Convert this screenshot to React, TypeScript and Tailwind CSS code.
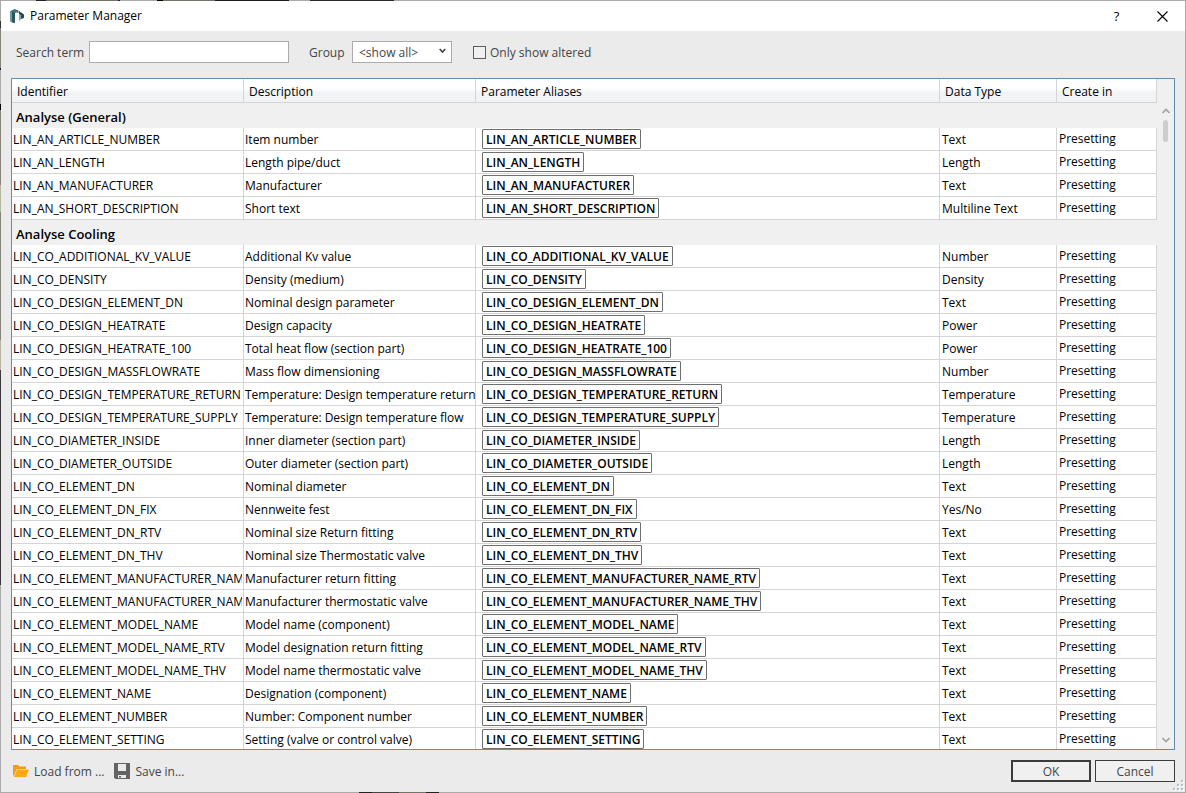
import { useRef, useState } from "react";
import { clsx } from "clsx";

type Row = {
  id: string;
  description: string;
  type: string;
};

type Group = {
  name: string;
  rows: Row[];
};

const row = (id: string, description: string, type: string): Row => ({ id, description, type });

const GROUPS: Group[] = [
  {
    name: "Analyse (General)",
    rows: [
      row("LIN_AN_ARTICLE_NUMBER", "Item number", "Text"),
      row("LIN_AN_LENGTH", "Length pipe/duct", "Length"),
      row("LIN_AN_MANUFACTURER", "Manufacturer", "Text"),
      row("LIN_AN_SHORT_DESCRIPTION", "Short text", "Multiline Text"),
    ],
  },
  {
    name: "Analyse Cooling",
    rows: [
      row("LIN_CO_ADDITIONAL_KV_VALUE", "Additional Kv value", "Number"),
      row("LIN_CO_DENSITY", "Density (medium)", "Density"),
      row("LIN_CO_DESIGN_ELEMENT_DN", "Nominal design parameter", "Text"),
      row("LIN_CO_DESIGN_HEATRATE", "Design capacity", "Power"),
      row("LIN_CO_DESIGN_HEATRATE_100", "Total heat flow (section part)", "Power"),
      row("LIN_CO_DESIGN_MASSFLOWRATE", "Mass flow dimensioning", "Number"),
      row("LIN_CO_DESIGN_TEMPERATURE_RETURN", "Temperature: Design temperature return", "Temperature"),
      row("LIN_CO_DESIGN_TEMPERATURE_SUPPLY", "Temperature: Design temperature flow", "Temperature"),
      row("LIN_CO_DIAMETER_INSIDE", "Inner diameter (section part)", "Length"),
      row("LIN_CO_DIAMETER_OUTSIDE", "Outer diameter (section part)", "Length"),
      row("LIN_CO_ELEMENT_DN", "Nominal diameter", "Text"),
      row("LIN_CO_ELEMENT_DN_FIX", "Nennweite fest", "Yes/No"),
      row("LIN_CO_ELEMENT_DN_RTV", "Nominal size Return fitting", "Text"),
      row("LIN_CO_ELEMENT_DN_THV", "Nominal size Thermostatic valve", "Text"),
      row("LIN_CO_ELEMENT_MANUFACTURER_NAME_RTV", "Manufacturer return fitting", "Text"),
      row("LIN_CO_ELEMENT_MANUFACTURER_NAME_THV", "Manufacturer thermostatic valve", "Text"),
      row("LIN_CO_ELEMENT_MODEL_NAME", "Model name (component)", "Text"),
      row("LIN_CO_ELEMENT_MODEL_NAME_RTV", "Model designation return fitting", "Text"),
      row("LIN_CO_ELEMENT_MODEL_NAME_THV", "Model name thermostatic valve", "Text"),
      row("LIN_CO_ELEMENT_NAME", "Designation (component)", "Text"),
      row("LIN_CO_ELEMENT_NUMBER", "Number: Component number", "Text"),
      row("LIN_CO_ELEMENT_SETTING", "Setting (valve or control valve)", "Text"),
    ],
  },
];

const HEADERS = ["Identifier", "Description", "Parameter Aliases", "Data Type", "Create in"];

function AppLogo() {
  return (
    <svg width="14" height="16" viewBox="0 0 14 16" aria-hidden="true">
      <path d="M0 3.5 2 2.500V14.500L0 13.500z" fill="#6b9da2" />
      <path d="M2 2.500 5 4v11l-3-.500z" fill="#2c565c" />
      <path d="M0 3.500 4.500 1 8.500 2.500V5L6.500 4.500 5 5z" fill="#3f7378" />
      <path d="M9 3 14 6.500V10l-3 1V7.500L9 6z" fill="#234b52" />
      <path d="M9 6 11 7.500V11l-2 2z" fill="#7aa5a9" />
    </svg>
  );
}

function FolderIcon() {
  return (
    <svg width="16" height="12" viewBox="0 0 16 12" aria-hidden="true">
      <path d="M0 1c0-.6.4-1 1-1h4l1.500 1.500H13V4H3.500L1 10.500H0z" fill="#f39c12" />
      <path d="M4 4.600h12L13 12H1z" fill="#ffa812" />
    </svg>
  );
}

function DiskIcon() {
  return (
    <svg width="16" height="16" viewBox="0 0 16 16" aria-hidden="true">
      <path d="M0 0h16v16H1.500L0 14.500z" fill="#636363" />
      <path d="M4 1h8v7H4z" fill="#ebebeb" />
      <path d="M4 12h8v3H4z" fill="#ebebeb" />
      <path d="M5 13h2v1.500H5z" fill="#636363" />
    </svg>
  );
}

function Chevron({ up = false }: { up?: boolean }) {
  return (
    <svg width="8" height="6" viewBox="0 0 8 6" fill="none" stroke="#a3a3a3" strokeWidth="1.6" aria-hidden="true">
      <path d={up ? "M.5 5 4 1.500 7.500 5" : "M.5 1 4 4.500 7.500 1"} />
    </svg>
  );
}

function SizeGrip() {
  const dots = [[8, 0], [4, 4], [8, 4], [0, 8], [4, 8], [8, 8]];
  return (
    <svg className="absolute right-px bottom-px" width="11" height="11" viewBox="0 0 11 11" aria-hidden="true">
      {dots.map(([x, y]) => (
        <g key={`${x}-${y}`}>
          <rect x={x + 1} y={y + 1} width="2" height="2" fill="#fff" />
          <rect x={x} y={y} width="2" height="2" fill="#b4bccb" />
        </g>
      ))}
    </svg>
  );
}

// Thin slivers of the application behind the dialog, visible along its frame.
function FrameEdges() {
  return (
    <>
      <div className="pointer-events-none absolute -top-px left-[35px] h-px w-[358px] bg-[linear-gradient(90deg,#222_10px,#757367_10px_82px,#222_82px_84px,#aaa_84px_121px,#000_121px_127px,#757367_127px_179px,#1e1a1c_179px_253px,#aaa_253px_274px,#2d292c_274px)]" />
      <div className="pointer-events-none absolute top-5 -left-px h-[564px] w-px bg-[linear-gradient(#333_7px,#85827a_7px_47px,#222_47px_49px,#aaa_49px_83px,#000_83px_89px,#85827a_89px_164px,#b5b5a0_164px_191px,#85827a_191px_319px,#b5b5a0_319px_349px,#3c3a3c_349px)]" />
      <div className="pointer-events-none absolute -bottom-px left-[358px] h-px w-20 bg-[linear-gradient(90deg,#222_13px,#444_13px_40px,#757367_40px_67px,#222_67px)]" />
    </>
  );
}

export default function App() {
  const [search, setSearch] = useState("");
  const [group, setGroup] = useState("");
  const [onlyAltered, setOnlyAltered] = useState(false);
  const scroller = useRef<HTMLDivElement>(null);

  const scrollBy = (top: number) => scroller.current?.scrollBy({ top });

  const term = search.trim().toLowerCase();
  const groups = GROUPS.filter((g) => !group || g.name === group)
    .map((g) => ({
      ...g,
      rows: g.rows.filter((r) => `${r.id} ${r.description}`.toLowerCase().includes(term)),
    }))
    .filter((g) => g.rows.length > 0);

  return (
    <div className="relative flex h-screen flex-col border border-[#aaaaaa] bg-[#ebebeb] font-['Open_Sans','Noto_Sans',sans-serif] text-[12px] leading-4 text-[#444444]">
      {/* Title bar */}
      <header className="flex h-[30px] shrink-0 items-center bg-white pl-[9px] text-black">
        <AppLogo />
        <h1 className="ml-1.5 flex-1">Parameter Manager</h1>
        <button type="button" aria-label="Help" className="w-[45px] text-[13px] font-medium">?</button>
        <button type="button" aria-label="Close" className="flex w-[46px] justify-center">
          <svg width="11" height="11" viewBox="0 0 11 11" stroke="#000" strokeWidth="1.1" aria-hidden="true">
            <path d="M.5.500l10 10M10.500.500l-10 10" />
          </svg>
        </button>
      </header>

      {/* Filters */}
      <div className="flex shrink-0 items-center pt-2.5 pb-[15px] pl-[15px]">
        <label htmlFor="search" className="w-[73px] pt-0.5">Search term</label>
        <input
          id="search"
          value={search}
          onChange={(e) => setSearch(e.target.value)}
          className="h-[22px] w-[200px] border border-[#ababab] bg-white px-1 outline-none"
        />
        <label htmlFor="group" className="ml-5 w-[43px] pt-0.5">Group</label>
        <div className="relative">
          <select
            id="group"
            value={group}
            onChange={(e) => setGroup(e.target.value)}
            className="block h-[22px] w-[100px] appearance-none border border-[#ababab] bg-white pt-0.5 pl-1.5 outline-none"
          >
            <option value="">&lt;show all&gt;</option>
            {GROUPS.map((g) => (
              <option key={g.name}>{g.name}</option>
            ))}
          </select>
          <svg className="pointer-events-none absolute top-[7px] right-1.5" width="7" height="6" viewBox="0 0 7 6" fill="none" stroke="#444" strokeWidth="1.6" aria-hidden="true">
            <path d="M.7 1 3.500 4 6.300 1" />
          </svg>
        </div>
        <label className="ml-[21px] flex items-center gap-1">
          <input
            type="checkbox"
            checked={onlyAltered}
            onChange={(e) => setOnlyAltered(e.target.checked)}
            className="size-[13px] appearance-none border border-[#5c5c5c] bg-[#f0f0f0] checked:bg-[#5c5c5c]"
          />
          <span className="pt-0.5">Only show altered</span>
        </label>
      </div>

      {/* Parameter grid */}
      <div className="mx-2.5 flex min-h-0 flex-1 border border-[#688caf] bg-[#f0f0f0] text-black">
        <div ref={scroller} className="min-w-0 flex-1 overflow-x-hidden overflow-y-auto [scrollbar-width:none]">
          <table className="w-full table-fixed border-separate border-spacing-0 text-left">
            <colgroup>
              <col className="w-[232px]" />
              <col className="w-[232px]" />
              <col />
              <col className="w-[117px]" />
              <col className="w-[100px]" />
            </colgroup>
            <thead className="sticky top-0">
              <tr>
                {HEADERS.map((title) => (
                  <th
                    key={title}
                    className="h-6 border-r border-b border-[#d5d5d5] bg-linear-to-b from-white from-40% to-[#f1f3f5] to-60% p-0 pt-0.5 pl-[5px] font-normal"
                  >
                    {title}
                  </th>
                ))}
              </tr>
            </thead>
            {groups.map((g) => (
              <tbody key={g.name}>
                <tr>
                  <th colSpan={5} className="h-[25px] p-0 pt-0.5 pl-1 text-[13px] font-semibold">{g.name}</th>
                </tr>
                {g.rows.map((r) => (
                  <tr key={r.id} className="bg-white *:h-[23px] *:border-r *:border-b *:border-[#d5d5d5] *:p-0">
                    <td className="pt-0.5! pr-px! pl-px!">
                      <span className="block overflow-hidden whitespace-nowrap">{r.id}</span>
                    </td>
                    <td className="pt-0.5! pl-px! whitespace-nowrap">{r.description}</td>
                    <td className="pl-1.5!">
                      <span className="block w-fit rounded-[1px] border border-[#6f6f6f] px-[3px] pt-0.5 font-semibold">{r.id}</span>
                    </td>
                    <td className="pt-0.5! pl-0.5!">{r.type}</td>
                    <td className="pl-0.5!">Presetting</td>
                  </tr>
                ))}
              </tbody>
            ))}
          </table>
        </div>
        <div className="flex w-[17px] shrink-0 flex-col items-center pt-[29px] pb-1.5">
          <button type="button" aria-label="Scroll up" onClick={() => scrollBy(-23)}>
            <Chevron up />
          </button>
          <div className="mt-1.5 h-[22px] w-[5px] rounded-full bg-[#cdcdcd]" />
          <button type="button" aria-label="Scroll down" className="mt-auto" onClick={() => scrollBy(23)}>
            <Chevron />
          </button>
        </div>
      </div>

      {/* Actions */}
      <footer className="flex shrink-0 items-center p-2.5">
        <button type="button" className="flex items-center gap-[5px] pl-0.5">
          <FolderIcon />
          <span className="pt-0.5">Load from ...</span>
        </button>
        <button type="button" className="ml-2.5 flex items-center gap-[5px]">
          <DiskIcon />
          <span className="pt-0.5">Save in...</span>
        </button>
        <div className="ml-auto flex gap-1">
          {["OK", "Cancel"].map((name) => (
            <button
              key={name}
              type="button"
              className={clsx(
                "h-[22px] w-20 border-[#3c3c3c] bg-[#f0f0f0] pt-0.5",
                name === "OK" ? "border-2" : "border"
              )}
            >
              {name}
            </button>
          ))}
        </div>
      </footer>
      <SizeGrip />
      <FrameEdges />
    </div>
  );
}
